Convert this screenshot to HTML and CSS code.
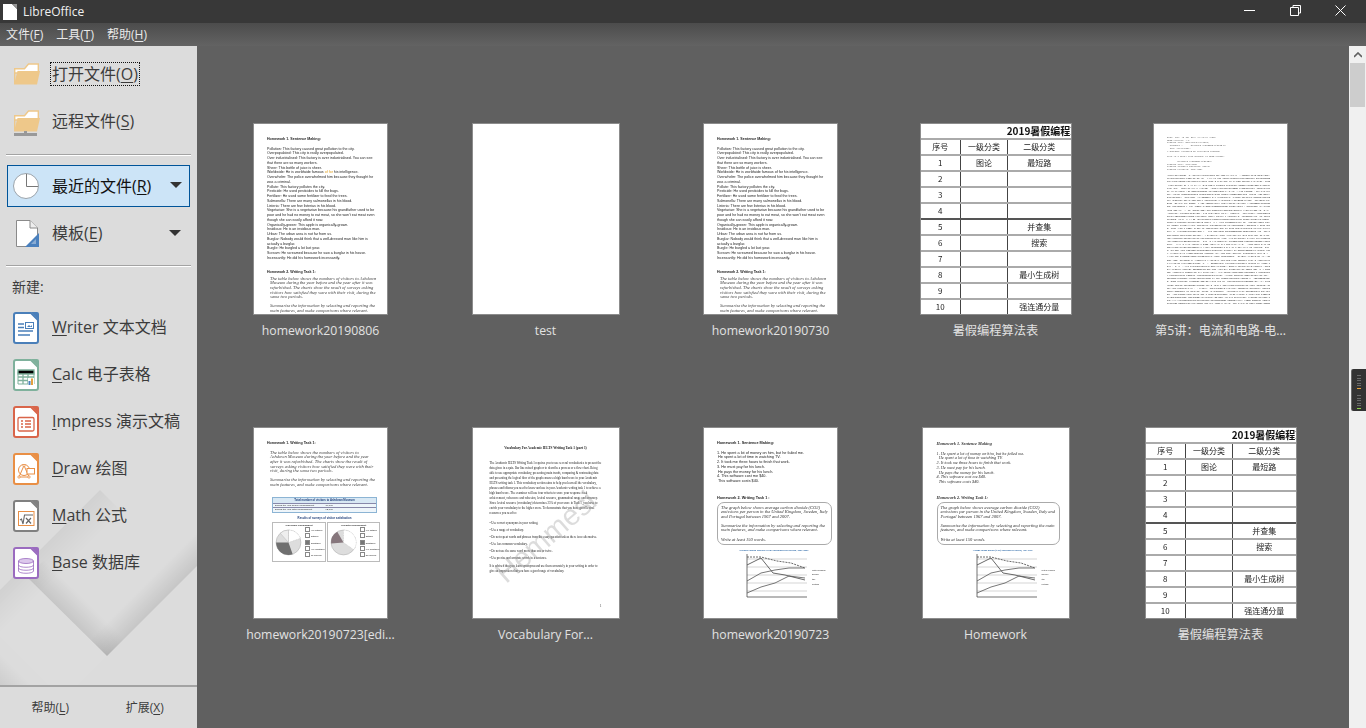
FILE: index.html
```html
<!DOCTYPE html>
<html lang="zh">
<head>
<meta charset="utf-8">
<title>LibreOffice</title>
<link rel="stylesheet" href="styles.css">
</head>
<body>
<svg class="defs" width="0" height="0" aria-hidden="true">
  <symbol id="folder" viewBox="0 0 26 22">
    <path d="M.7 21V5.7H10.500L14.500 1H24.300V10H.7" fill="#fff" stroke="#eec88a" stroke-width="1.400"/>
    <path d="M3.500 8H26L23 21.500H0Z" fill="#eec88a"/>
  </symbol>
  <symbol id="doc" viewBox="0 0 26 32">
    <path d="M3 1H18L25 8V29A2 2 0 0 1 23 31H3A2 2 0 0 1 1 29V3A2 2 0 0 1 3 1Z" fill="#fff" stroke="currentColor" stroke-width="2"/>
    <path d="M18 0H24A2 2 0 0 1 26 2V8Z" fill="currentColor"/>
  </symbol>
  <symbol id="linechart" viewBox="0 0 70 48">
    <g stroke="#bbb" stroke-width=".6"><path d="M8 6H68M8 14H68M8 22H68M8 30H68M8 38H68"/></g>
    <path d="M8 1V44H68" fill="none" stroke="#333" stroke-width=".7"/>
    <path d="M8 4L22 4L38 8L52 10L66 15" fill="none" stroke="#444" stroke-width=".8" stroke-dasharray="2 1"/>
    <path d="M8 12L22 5L34 20L46 22L66 27" fill="none" stroke="#444" stroke-width=".8"/>
    <path d="M8 28L22 20L36 17L50 15L66 15" fill="none" stroke="#555" stroke-width=".8"/>
    <path d="M8 40L22 34L36 30L50 23L66 25" fill="none" stroke="#555" stroke-width=".8"/>
  </symbol>
</svg>

<header class="titlebar">
  <svg class="logo" viewBox="0 0 14 16"><path d="M0 0H9L14 5V16H0Z" fill="#fff"/><path d="M9.500 0L14 4.500V0Z" fill="#999"/></svg>
  <span class="app-title">LibreOffice</span>
  <div class="winctl">
    <svg class="winbtn" viewBox="0 0 11 11"><path d="M0 5.500H11" stroke="#fff" fill="none"/></svg>
    <svg class="winbtn" viewBox="0 0 11 11"><path d="M3 2.500V.5H10.500V8H8.500M.5 2.500H8.500V10.500H.5Z" stroke="#fff" fill="none"/></svg>
    <svg class="winbtn" viewBox="0 0 11 11"><path d="M.5 .5L10.500 10.500M10.500 .5L.5 10.500" stroke="#fff" fill="none"/></svg>
  </div>
</header>
<nav class="menubar">
  <span>文件(<u>F</u>)</span><span>工具(<u>T</u>)</span><span>帮助(<u>H</u>)</span>
</nav>

<div class="body">
  <aside class="sidebar">
    <svg class="folds" viewBox="0 46 197 682" preserveAspectRatio="none" aria-hidden="true">
      <defs>
        <linearGradient id="f1" gradientUnits="userSpaceOnUse" x1="107" y1="656" x2="90" y2="639"><stop offset="0" stop-color="#000" stop-opacity=".1"/><stop offset="1" stop-color="#000" stop-opacity="0"/></linearGradient>
        <linearGradient id="f2" gradientUnits="userSpaceOnUse" x1="107" y1="656" x2="124" y2="639"><stop offset="0" stop-color="#000" stop-opacity=".1"/><stop offset="1" stop-color="#000" stop-opacity="0"/></linearGradient>
        <linearGradient id="f3" gradientUnits="userSpaceOnUse" x1="0" y1="590" x2="22" y2="612"><stop offset="0" stop-color="#000" stop-opacity=".05"/><stop offset="1" stop-color="#000" stop-opacity="0"/></linearGradient>
        <linearGradient id="f4" gradientUnits="userSpaceOnUse" x1="0" y1="685" x2="16" y2="669"><stop offset="0" stop-color="#000" stop-opacity=".07"/><stop offset="1" stop-color="#000" stop-opacity="0"/></linearGradient>
      </defs>
      <path d="M107 656L197 566V532L90 639Z" fill="url(#f1)"/>
      <path d="M27 577L107 656L124 639L44 560Z" fill="url(#f2)"/>
      <path d="M0 590L100 490L125 515L24 614L0 638Z" fill="url(#f3)"/>
      <path d="M0 637L48 685H0Z" fill="url(#f4)"/>
      <path d="M27 577L107 656L78 685H48L0 637V604Z" fill="#fff" opacity=".04"/>
    </svg>

    <div class="side-main">
      <a class="sbtn sbtn-open"><svg class="ic-folder"><use href="#folder"/></svg><span class="focus">打开文件(<u>O</u>)</span></a>
      <a class="sbtn"><span class="remote"><svg class="ic-folder"><use href="#folder"/></svg><svg class="ic-base" viewBox="0 0 23 5"><path d="M10 0H13V2H23V5H0V2H10Z" fill="#999"/></svg></span><span>远程文件(<u>S</u>)</span></a>
      <hr class="sep sep-a">
      <a class="sbtn sbtn-sel">
        <svg class="ic-clock" viewBox="0 0 26 26"><circle cx="13" cy="13" r="12.500" fill="#fff" stroke="#9aa3ab"/><path d="M13.500 1V13.500H25" fill="none" stroke="#777"/></svg>
        <span>最近的文件(<u>R</u>)</span><i class="arrow"></i>
      </a>
      <a class="sbtn sbtn-tpl">
        <svg class="ic-tpl" viewBox="0 0 26 27"><path d="M3.500 .5H17L24.500 8V26.500H3.500Z" fill="#fff" stroke="#8a8a8a"/><path d="M17 .5V8H24.500" fill="#eee" stroke="#8a8a8a"/><path d="M26 13V27H12Z" fill="#4a80bd"/><path d="M23 19V24H18Z" fill="#fff" opacity=".35"/></svg>
        <span>模板(<u>E</u>)</span><i class="arrow"></i>
      </a>
      <hr class="sep sep-b">
      <div class="newlabel">新建:</div>

      <a class="sbtn"><svg class="ic-app c-writer" viewBox="0 0 26 32"><use href="#doc"/><path d="M5 12H11M5 15.500H11M5 19H20M5 23H17" stroke="currentColor" stroke-width="1.600"/><rect x="12.500" y="10.500" width="8" height="6" fill="#fff" stroke="currentColor"/><path d="M14 15L16 13L17.500 14.500L19 13V15Z" fill="currentColor"/></svg><span><u>W</u>riter 文本文档</span></a>
      <a class="sbtn"><svg class="ic-app c-calc" viewBox="0 0 26 32"><use href="#doc"/><path d="M5 12.500H21V25H5Z" fill="none" stroke="currentColor"/><path d="M5 11H21V15H5ZM5 18H21M5 21.500H21M10 15V25M15 15V25" stroke="currentColor" stroke-width="1.300"/><rect x="15" y="19" width="6" height="7" fill="#fff"/><rect x="15.500" y="22" width="2" height="4" fill="#4a80bd"/><rect x="18" y="19.500" width="2" height="6.500" fill="#e3a13f"/></svg><span><u>C</u>alc 电子表格</span></a>
      <a class="sbtn"><svg class="ic-app c-impress" viewBox="0 0 26 32"><use href="#doc"/><rect x="5" y="11.500" width="16" height="13.500" rx="1.500" fill="none" stroke="currentColor" stroke-width="1.300"/><path d="M8 15H10M12 15H18M8 18H10M12 18H18M8 21H10M12 21H18" stroke="currentColor" stroke-width="1.400"/></svg><span><u>I</u>mpress 演示文稿</span></a>
      <a class="sbtn"><svg class="ic-app c-draw" viewBox="0 0 26 32"><use href="#doc"/><circle cx="11" cy="17" r="5.500" fill="none" stroke="currentColor"/><path d="M11 12.500L16 24H6Z" fill="none" stroke="currentColor"/><rect x="14" y="15.500" width="7.500" height="5.500" fill="#fff" stroke="currentColor"/><path d="M5 23H7V25H5ZM15 23H17V25H15ZM10 11.500H12V13.500H10Z" fill="#fff" stroke="currentColor" stroke-width=".7"/></svg><span><u>D</u>raw 绘图</span></a>
      <a class="sbtn"><svg class="ic-app c-math" viewBox="0 0 26 32"><use href="#doc"/><rect x="5.500" y="11.500" width="15.500" height="14" fill="none" stroke="#e98f45"/><path d="M7 20L8.500 19L10 24L11.500 15H20" fill="none" stroke="#666" stroke-width="1.100"/><path d="M13 18L18 23.500M18 18L13 23.500" stroke="#666" stroke-width="1.200"/></svg><span><u>M</u>ath 公式</span></a>
      <a class="sbtn"><svg class="ic-app c-base" viewBox="0 0 26 32"><use href="#doc"/><ellipse cx="13" cy="14" rx="7.500" ry="2.500" fill="#dcc8ec" stroke="currentColor" stroke-width=".8"/><path d="M5.500 14V24C5.500 27 20.500 27 20.500 24V14" fill="none" stroke="currentColor" stroke-width=".8"/><path d="M5.500 18C5.500 21 20.500 21 20.500 18M5.500 21C5.500 24 20.500 24 20.500 21" fill="none" stroke="currentColor" stroke-width=".8"/></svg><span><u>B</u>ase 数据库</span></a>
    </div>

    <footer class="side-foot">
      <span>帮助(<u>L</u>)</span><span>扩展(<u>X</u>)</span>
    </footer>
  </aside>

  <main class="recent">
    <div class="grid">

      <figure class="cell">
        <div class="thumb w-a4"><div class="page hw">
          <p class="hw-h">Homework 1. Sentence Making:</p>
          <p>Pollution: This factory caused great pollution to the city.<br>Overpopulated: This city is really overpopulated.<br>Over industrialised: This factory is over industrialised. You can see that there are so many workers.<br>Sheer: This bottle of juice is sheer.<br>Worldwide: He is worldwide famous <mark class="hl">of for</mark> his intelligence.<br>Overwhelm: The police overwhelmed him because they thought he was a criminal.<br>Pollute: This factory pollutes the city.<br>Pesticide: He used pesticides to kill the bugs.<br>Fertilizer: He used some fertilizer to feed the trees.<br>Salmonella: There are many salmonellas in his blood.<br>Listeria: There are few listerias in his blood.<br>Vegetarian: She is a vegetarian because his grandfather used to be poor and he had no money to eat meat, so she won't eat meat even though she can easily afford it now.<br>Organically-grown: This apple is organically-grown.<br>Insidious: He is an insidious man.<br>Urban: The urban area is not far from us.<br>Burglar: Nobody would think that a well-dressed man like him is actually a burglar.<br>Burgle: He burgled a lot last year.<br>Scream: He screamed because he saw a burglar in his house.<br>Incessantly: He did his homework incessantly.</p>
          <p class="hw-h2">Homework 2. Writing Task 1:</p>
          <p class="task">The table below shows the numbers of visitors to Ashdown Museum during the year before and the year after it was refurbished. The charts show the result of surveys asking visitors how satisfied they were with their visit, during the same two periods.</p>
          <p class="task">Summarize the information by selecting and reporting the main features, and make comparisons where relevant.</p>
        </div></div>
        <figcaption>homework20190806</figcaption>
      </figure>

      <figure class="cell">
        <div class="thumb w-wide"><div class="page"></div></div>
        <figcaption>test</figcaption>
      </figure>

      <figure class="cell">
        <div class="thumb w-a4"><div class="page hw">
          <p class="hw-h">Homework 1. Sentence Making:</p>
          <p>Pollution: This factory caused great pollution to the city.<br>Overpopulated: This city is really overpopulated.<br>Over industrialised: This factory is over industrialised. You can see that there are so many workers.<br>Sheer: This bottle of juice is sheer.<br>Worldwide: He is worldwide famous of for his intelligence.<br>Overwhelm: The police overwhelmed him because they thought he was a criminal.<br>Pollute: This factory pollutes the city.<br>Pesticide: He used pesticides to kill the bugs.<br>Fertilizer: He used some fertilizer to feed the trees.<br>Salmonella: There are many salmonellas in his blood.<br>Listeria: There are few listerias in his blood.<br>Vegetarian: She is a vegetarian because his grandfather used to be poor and he had no money to eat meat, so she won't eat meat even though she can easily afford it now.<br>Organically-grown: This apple is organically-grown.<br>Insidious: He is an insidious man.<br>Urban: The urban area is not far from us.<br>Burglar: Nobody would think that a well-dressed man like him is actually a burglar.<br>Burgle: He burgled a lot last year.<br>Scream: He screamed because he saw a burglar in his house.<br>Incessantly: He did his homework incessantly.</p>
          <p class="hw-h2">Homework 2. Writing Task 1:</p>
          <p class="task">The table below shows the numbers of visitors to Ashdown Museum during the year before and the year after it was refurbished. The charts show the result of surveys asking visitors how satisfied they were with their visit, during the same two periods.</p>
          <p class="task">Summarize the information by selecting and reporting the main features, and make comparisons where relevant.</p>
        </div></div>
        <figcaption>homework20190730</figcaption>
      </figure>

      <figure class="cell">
        <div class="thumb w-table"><div class="page">
          <table class="sheet">
            <colgroup><col class="c1"><col class="c2"><col class="c3"><col class="c4"></colgroup>
            <tr class="t-title"><td colspan="4">2019暑假编程算法表</td></tr>
            <tr><th>序号</th><th>一级分类</th><th>二级分类</th><td></td></tr>
            <tr><td>1</td><td>图论</td><td>最短路</td><td></td></tr>
            <tr><td>2</td><td></td><td></td><td></td></tr>
            <tr><td>3</td><td></td><td></td><td></td></tr>
            <tr><td>4</td><td></td><td></td><td></td></tr>
            <tr><td>5</td><td></td><td>并查集</td><td></td></tr>
            <tr><td>6</td><td></td><td>搜索</td><td></td></tr>
            <tr><td>7</td><td></td><td></td><td></td></tr>
            <tr><td>8</td><td></td><td>最小生成树</td><td></td></tr>
            <tr><td>9</td><td></td><td></td><td></td></tr>
            <tr><td>10</td><td></td><td>强连通分量</td><td></td></tr>
          </table>
        </div></div>
        <figcaption>暑假编程算法表</figcaption>
      </figure>

      <figure class="cell">
        <div class="thumb w-a4"><div class="page mail">
          <p>Date: Thu, 18 Jul 2019 10:12:45 +0800<br>MIME-Version: 1.0<br>Content-Type: multipart/related;<br>&nbsp;&nbsp;boundary="----=_NextPart_01D53D2E.8A3F7B40"<br>&nbsp;&nbsp;type="text/html"<br>X-MimeOLE: Produced By Microsoft MimeOLE</p>
          <p>This is a multi-part message in MIME format.</p>
          <p>------=_NextPart_01D53D2E.8A3F7B40<br>Content-Type: text/html<br>Content-Transfer-Encoding: base64<br>Content-Location: page.html</p>
          <div class="dump-clip"><p class="mail-dump" id="dump"></p></div>
        </div></div>
        <figcaption>第5讲：电流和电路-电...</figcaption>
      </figure>

      <figure class="cell">
        <div class="thumb w-a4"><div class="page hw pie-page">
          <p class="hw-h">Homework 1. Writing Task 1:</p>
          <p class="task">The table below shows the numbers of visitors to Ashdown Museum during the year before and the year after it was refurbished. The charts show the result of surveys asking visitors how satisfied they were with their visit, during the same two periods.</p>
          <p class="task">Summarize the information by selecting and reporting the main features, and make comparisons where relevant.</p>
          <div class="vis">
            <div class="vis-h">Total number of visitors to Ashdown Museum</div>
            <div class="vis-r"><span>During the year before refurbishment</span><span>74,000</span></div>
            <div class="vis-r"><span>During the year after refurbishment</span><span>92,000</span></div>
          </div>
          <div class="vis-t">Results of surveys of visitor satisfaction</div>
          <div class="pies">
            <div class="pie"><b>Year before refurbishment</b>
              <div class="pie-row"><svg viewBox="0 0 28 28"><circle cx="14" cy="14" r="12" fill="#ddd" stroke="#999" stroke-width=".4"/><path d="M14 14L2 14A12 12 0 0 0 18 25.300Z" fill="#6f6f6f"/><path d="M14 14V2A12 12 0 0 1 25.500 10Z" fill="#fff" stroke="#999" stroke-width=".3" stroke-dasharray=".8"/><path d="M14 14L6 5A12 12 0 0 1 14 2Z" fill="#eee" stroke="#999" stroke-width=".3"/></svg>
              <ul class="pie-key"><li>Very satisfied</li><li>Satisfied</li><li class="on">Dissatisfied</li><li>Very dissatisfied</li><li>No response</li></ul></div></div>
            <div class="pie"><b>Year after refurbishment</b>
              <div class="pie-row"><svg viewBox="0 0 28 28"><circle cx="14" cy="14" r="12" fill="#ddd" stroke="#999" stroke-width=".4"/><path d="M14 14L2 15A12 12 0 0 1 8 3.600Z" fill="#86767c"/><path d="M14 14L14 2A12 12 0 0 1 24 21Z" fill="#fff" stroke="#999" stroke-width=".3" stroke-dasharray=".8"/></svg>
              <ul class="pie-key"><li>Very satisfied</li><li>Satisfied</li><li class="on">Dissatisfied</li><li>Very dissatisfied</li><li>No response</li></ul></div></div>
          </div>
        </div></div>
        <figcaption>homework20190723[edi...</figcaption>
      </figure>

      <figure class="cell">
        <div class="thumb w-wide"><div class="page vocab">
          <p class="vocab-h">Vocabulary For Academic IELTS Writing Task 1 (part 1)</p>
          <p>The Academic IELTS Writing Task 1 requires you to use several vocabularies to present the data given in a quiz. Bar line mixed graph or to describe a process or a flow chart. Being able to use appropriate vocabulary, presenting main trends, comparing &amp; contrasting data and presenting the logical flow of the graph ensures a high band score in your Academic IELTS writing task 1. This vocabulary section aims to help you learn all the vocabulary, phrases and idioms you need to know and use in your Academic writing task 1 to achieve a high band score. The examiner will use four criteria to score your response: task achievement, coherence and cohesion, lexical resource, grammatical range and accuracy. Since lexical resource (vocabulary) determines 25% of your score in Task 1, you have to enrich your vocabulary to the higher score. To demonstrate that you have good lexical resources you need to:</p>
          <ul>
            <li>Use correct synonyms in your writing.</li>
            <li>Use a range of vocabulary.</li>
            <li>Do not repeat words and phrases from the essay question unless there is no alternative.</li>
            <li>Use less common vocabulary.</li>
            <li>Do not use the same word more than one or twice.</li>
            <li>Use precise and accurate words in a sentence.</li>
          </ul>
          <p>It is advised that you learn synonyms and use them accurately in your writing in order to give an impression that you have a good range of vocabulary.</p>
          <span class="page-no">1</span>
          <span class="wm">Hemmesi</span>
        </div></div>
        <figcaption>Vocabulary For...</figcaption>
      </figure>

      <figure class="cell">
        <div class="thumb w-a4"><div class="page hw hw-line">
          <p class="hw-h">Homework 1. Sentence Making:</p>
          <p>1. He spent a lot of money on him, but he failed me.<br>&nbsp;He spent a lot of time in watching TV.<br>2. It took me three hours to finish that work.<br>3. He must pay for his lunch.<br>&nbsp;He pays the money for his lunch.<br>4. This software cost me $40.<br>&nbsp;This software costs $40.</p>
          <p class="hw-h hw-h3">Homework 2. Writing Task 1 :</p>
          <div class="box"><p>The graph below shows average carbon dioxide (CO2) emissions per person in the United Kingdom, Sweden, Italy and Portugal between 1967 and 2007.</p><p>Summarize the information by selecting and reporting the main features, and make comparisons where relevant.</p><p>Write at least 150 words.</p></div>
          <div class="chart-t">Average carbon dioxide (CO2) emissions per person, 1967-2007</div>
          <div class="chart-row"><svg class="chart"><use href="#linechart"/></svg><ul class="legend"><li>United Kingdom</li><li>Sweden</li><li>Italy</li><li>Portugal</li></ul></div>
        </div></div>
        <figcaption>homework20190723</figcaption>
      </figure>

      <figure class="cell">
        <div class="thumb w-wide"><div class="page hw hw-ital">
          <p class="hw-h">Homework 1. Sentence Making</p>
          <p>1. He spent a lot of money on him, but he failed me.<br>&nbsp;&nbsp;He spent a lot of time in watching TV.<br>2. It took me three hours to finish that work.<br>3. He must pay for his lunch.<br>&nbsp;&nbsp;He pays the money for his lunch.<br>4. This software cost me $40.<br>&nbsp;&nbsp;This software costs $40.</p>
          <p class="hw-h hw-h3">Homework 2. Writing Task 1:</p>
          <div class="box"><p>The graph below shows average carbon dioxide (CO2) emissions per person in the United Kingdom, Sweden, Italy and Portugal between 1967 and 2007.</p><p>Summarize the information by selecting and reporting the main features, and make comparisons where relevant.</p><p>Write at least 150 words.</p></div>
          <div class="chart-t">Average carbon dioxide (CO2) emissions per person, 1967-2007</div>
          <div class="chart-row"><svg class="chart"><use href="#linechart"/></svg><ul class="legend"><li>United Kingdom</li><li>Sweden</li><li>Italy</li><li>Portugal</li></ul></div>
        </div></div>
        <figcaption>Homework</figcaption>
      </figure>

      <figure class="cell">
        <div class="thumb w-table"><div class="page">
          <table class="sheet">
            <colgroup><col class="c1"><col class="c2"><col class="c3"><col class="c4"></colgroup>
            <tr class="t-title"><td colspan="4">2019暑假编程算法表</td></tr>
            <tr><th>序号</th><th>一级分类</th><th>二级分类</th><td></td></tr>
            <tr><td>1</td><td>图论</td><td>最短路</td><td></td></tr>
            <tr><td>2</td><td></td><td></td><td></td></tr>
            <tr><td>3</td><td></td><td></td><td></td></tr>
            <tr><td>4</td><td></td><td></td><td></td></tr>
            <tr><td>5</td><td></td><td>并查集</td><td></td></tr>
            <tr><td>6</td><td></td><td>搜索</td><td></td></tr>
            <tr><td>7</td><td></td><td></td><td></td></tr>
            <tr><td>8</td><td></td><td>最小生成树</td><td></td></tr>
            <tr><td>9</td><td></td><td></td><td></td></tr>
            <tr><td>10</td><td></td><td>强连通分量</td><td></td></tr>
          </table>
        </div></div>
        <figcaption>暑假编程算法表</figcaption>
      </figure>

    </div>

    <div class="vscroll">
      <div class="vs-up"><svg viewBox="0 0 8 6" width="8" height="6"><path d="M0 5L4 1L8 5" fill="none" stroke="#606060" stroke-width="1.600"/></svg></div>
      <div class="vs-thumb"></div>
    </div>
    <div class="meter">
      <div class="m-group"><i></i><i></i><i></i><i></i><i></i><i class="m-o"></i></div>
      <div class="m-group"><i></i><i></i><i></i><i></i><i></i><i class="m-g"></i></div>
    </div>
  </main>
</div>
<script src="app.js"></script>
</body>
</html>
```

FILE: styles.css
```css
* { box-sizing: border-box; }
html, body { margin: 0; height: 100%; overflow: hidden; }
body {
  width: 1366px; height: 728px; display: flex; flex-direction: column;
  font-family: "Open Sans", "Noto Sans CJK SC", sans-serif; background: #606060;
}
u { text-underline-offset: 2px; text-decoration-thickness: 1px; }
.defs { position: absolute; }

.titlebar { height: 23px; flex: none; display: flex; align-items: center; background: #383838; color: #f0f0f0; padding-left: 3px; }
.logo { width: 14px; height: 16px; }
.app-title { margin-left: 6px; font-size: 12px; }
.winctl { margin-left: auto; display: flex; gap: 34.500px; padding: 0 20px 3px 0; }
.winbtn { width: 11px; height: 11px; display: block; }

.menubar { height: 23px; flex: none; display: flex; align-items: center; gap: 13px; padding: 0 0 1px 6px; background: linear-gradient(#4c4c4c, #636363); color: #eaeaea; font-size: 12px; }

.body { flex: 1; display: flex; min-height: 0; }
.sidebar { width: 197px; flex: none; position: relative; display: flex; flex-direction: column; background: #dcdcdc; color: #3c3c3c; padding-top: 4px; overflow: hidden; }
.folds { position: absolute; inset: 0; width: 100%; height: 100%; }
.side-main { position: relative; display: flex; flex-direction: column; }

.sbtn { height: 47px; display: flex; align-items: center; padding-left: 13px; font-size: 16px; white-space: nowrap; position: relative; }
.sbtn > svg, .remote { flex: none; margin-right: 13px; }
.sbtn > span:not(.remote) { line-height: 20px; }
.ic-folder { width: 26px; height: 22px; display: block; margin-left: 1px; }
.remote { width: 26px; height: 26px; display: flex; flex-direction: column; position: relative; top: 2px; }
.ic-base { width: 23px; height: 5px; display: block; margin-left: 1px; margin-top: -1px; }
.focus { outline: 1px dotted #111; outline-offset: 1px; }
.sbtn-open > svg { margin-right: 12px; }
.ic-app + span { padding-bottom: 2px; }

.sep { border: 0; height: 2px; background: linear-gradient(#a3a3a3 50%, #fff 50%); margin: 0 6px; flex: none; }
.sep-a { margin-top: 10px; margin-bottom: 9px; }
.sep-b { margin-top: 9px; }
.sbtn-sel { height: 42px; margin: 0 7px; padding-left: 5px; background: #cce4f7; border: 1px solid #005499; color: #111; }
.ic-clock { width: 26px; height: 26px; }
.arrow { position: absolute; width: 0; height: 0; border-left: 6px solid transparent; border-right: 6px solid transparent; border-top: 6px solid #333; }
.sbtn-sel .arrow { left: 162px; top: 16px; }
.sbtn-tpl { height: 46px; margin-top: 3px; }
.sbtn-tpl .arrow { left: 169px; top: 20px; }
.ic-tpl { width: 26px; height: 27px; }
.newlabel { height: 28px; margin: 6px 0 3px; padding-left: 12px; font-size: 14px; line-height: 28px; }

.ic-app { width: 26px; height: 32px; }
.c-writer { color: #4a7fb9; }
.c-calc { color: #7fb19c; }
.c-impress { color: #d9654a; }
.c-draw { color: #e98f45; }
.c-math { color: #808080; }
.c-base { color: #9a6bbf; }

.side-foot { position: relative; margin-top: auto; height: 43px; border-top: 2px solid; border-image: linear-gradient(#a3a3a3 50%, #fff 50%) 2; display: grid; grid-template-columns: 94.500px 94.500px; justify-items: center; align-items: center; font-size: 12px; padding: 0 0 2px 3px; }

.recent { flex: 1; position: relative; overflow: hidden; background: #606060; padding: 77px 0 0 11px; }
.grid { display: grid; grid-template-columns: repeat(5, 225px); grid-auto-rows: 304px; }
.cell { margin: 0; display: flex; flex-direction: column; align-items: center; }
.thumb { height: 192px; border: 1px solid #8c8c8c; background: #fff; overflow: hidden; flex: none; }
.w-a4 { width: 135px; }
.w-wide { width: 148px; }
.w-table { width: 152px; }
figcaption { margin-top: 7px; height: 18px; line-height: 18px; font-size: 12.250px; color: #e2e2e2; white-space: nowrap; }

.page { width: 100%; height: 100%; position: relative; overflow: hidden; color: #222; filter: blur(.3px); }
.page p { margin: 0; }

.hw { padding: 13px 10px 0 13px; font: 3.600px/4.750px "Liberation Sans", sans-serif; }
.hw-h { font-weight: bold; margin-bottom: 4.750px !important; }
.hw-h2 { margin-top: 9.500px !important; margin-bottom: 2px !important; font-weight: bold; }
.hw mark.hl { background: none; color: #e0a020; }
.task { font: italic 4.550px/4.600px "Liberation Serif", serif; color: #444; padding-left: 3px; margin-bottom: 4.600px !important; }

.sheet { border-collapse: collapse; table-layout: fixed; width: 266px; font: 8px/1 "Noto Sans CJK SC", sans-serif; color: #222; }
.c1 { width: 40px; }
.c2 { width: 47px; }
.c3 { width: 63px; }
.c4 { width: 116px; }
.sheet td, .sheet th { height: 16px; padding: 0; text-align: center; font-weight: normal; border-bottom: 2px solid #aaa; }
.sheet tr > :nth-child(1), .sheet tr > :nth-child(2) { border-right: 1px solid #444; }
.sheet .t-title td { border-right: 0; font-weight: bold; font-size: 10px; height: 15px; color: #111; }
.sheet tr:nth-child(6) td { border-bottom-color: #555; }

.mail { padding: 13px 10px 0 13px; font: 2.200px/2.700px "Liberation Mono", monospace; color: #555; }
.mail p { margin-bottom: 2.500px; }
.dump-clip { height: 131px; width: 104px; overflow: hidden; }
.mail .mail-dump { width: 416px; height: 524px; margin: 0; transform: scale(.25); transform-origin: 0 0; font: 8.600px/12.500px "Liberation Mono", monospace; color: #222; word-break: break-all; }

.pie-page { padding-right: 11px; }
.pie-page .task:nth-of-type(2) { margin-top: 5px; }
.vis { margin: 9px 0 0 5px; width: 105px; border: .5px solid #8cb4d4; font-size: 2.400px; line-height: 3.800px; }
.vis-h { text-align: center; font-weight: bold; background: #d8e8f4; color: #1c3c78; font-size: 2.800px; line-height: 5px; }
.vis-r { display: grid; grid-template-columns: 1fr 1fr; border-top: .5px solid #88a; padding-left: 2px; background: #eef5fa; }
.vis-t { margin: 4px 0 1px 5px; width: 105px; text-align: center; font-weight: bold; color: #1c3c78; font-size: 2.800px; line-height: 3.600px; }
.pies { margin-left: 5px; width: 105px; display: grid; grid-template-columns: 1fr 1fr; gap: 1px; }
.pie { border: .5px solid #bbb; height: 40px; text-align: center; font-size: 2.200px; line-height: 4px; }
.pie b { display: block; }
.pie-row { display: flex; align-items: center; }
.pie-row svg { flex: none; width: 29px; height: 29px; margin-left: 1px; }
.pie-key { list-style: none; margin: 0 0 0 2px; padding: 0; text-align: left; font-size: 1.900px; line-height: 6.400px; white-space: nowrap; }
.pie-key li::before { content: ""; display: inline-block; width: 3px; height: 3px; border: .4px solid #888; margin-right: 1px; vertical-align: -1px; }
.pie-key li.on::before { background: #777; }

.vocab { padding: 18px 17px 0 17px; font: 3.050px/4.970px "Liberation Serif", serif; color: #222; }
.vocab-h { text-align: center; font-weight: bold; margin-bottom: 10px !important; font-size: 3.400px; }
.vocab ul { list-style: none; margin: 5px 0 3px; padding: 0; }
.vocab li { margin-bottom: 2.100px; }
.vocab li::before { content: "• "; }
.page-no { position: absolute; right: 17px; top: 176px; }
.wm { position: absolute; left: 73px; top: 109px; font: 29px/1 "Liberation Sans", sans-serif; color: rgba(140,140,140,.3); transform: translate(-50%, -50%) rotate(-41deg); white-space: nowrap; }

.hw-line { font-size: 3.800px; padding-right: 6px; }
.hw-h3 { margin-top: 12px !important; margin-bottom: 1px !important; }
.box { border: .7px solid #aaa; border-radius: 7px; padding: 3px 3px 2px; width: 115px; font: italic 4.500px/4.600px "Liberation Serif", serif; color: #333; }
.box p + p { margin-top: 4.600px; }
.chart-t { font-size: 2.300px; line-height: 3px; color: #2f6aa8; margin: 4px 0 1px 22px; font-weight: bold; white-space: nowrap; }
.chart-row { display: flex; align-items: center; margin-left: 22px; }
.chart { display: block; width: 70px; height: 48px; flex: none; }
.legend { list-style: none; margin: 0 0 0 3px; padding: 0; font: 1.900px/4.800px "Liberation Sans", sans-serif; white-space: nowrap; }

.hw-ital { padding: 14px 8px 0 14px; font: italic 4.250px/4.750px "Liberation Serif", serif; color: #333; }
.hw-ital .hw-h3 { margin-top: 11px !important; }
.hw-ital .box { width: 123px; }
.hw-ital .chart-t { margin-left: 36px; }
.hw-ital .chart-row { margin-left: 32px; }

.vscroll { position: absolute; top: 0; right: 0; bottom: 0; width: 17px; background: #f0f0f0; padding: 0 1px; }
.vs-up { height: 17px; display: flex; align-items: center; justify-content: center; }
.vs-thumb { height: 44px; background: #cdcdcd; }

.meter { position: absolute; right: 0; top: 323px; width: 14px; height: 42px; background: #333; border-radius: 2px 0 0 2px; box-shadow: -1px 0 0 #666; padding: 6px 5px 0; display: flex; flex-direction: column; gap: 5px; }
.m-group { display: flex; flex-direction: column; }
.m-group i { display: block; height: 1px; margin-bottom: 1.500px; background: #6a6a6a; }
.m-group .m-o { background: #e8a33c; }
.m-group .m-g { background: #8fd14f; }
```

FILE: app.js
```js
// Fills the dense page thumbnail with its speckled text dump.
var seed = 7, chars = "ABCDEFGHIJKLMNOPQRSTUVWXYZabcdefghijklmnopqrstuvwxyz0123456789+/....,,,,----    ", out = "";
for (var i = 0; i < 3600; i++) {
  seed = (seed * 1103515245 + 12345) % 2147483648;
  out += chars.charAt((seed >> 8) % chars.length);
}
document.getElementById("dump").textContent = out;
```
